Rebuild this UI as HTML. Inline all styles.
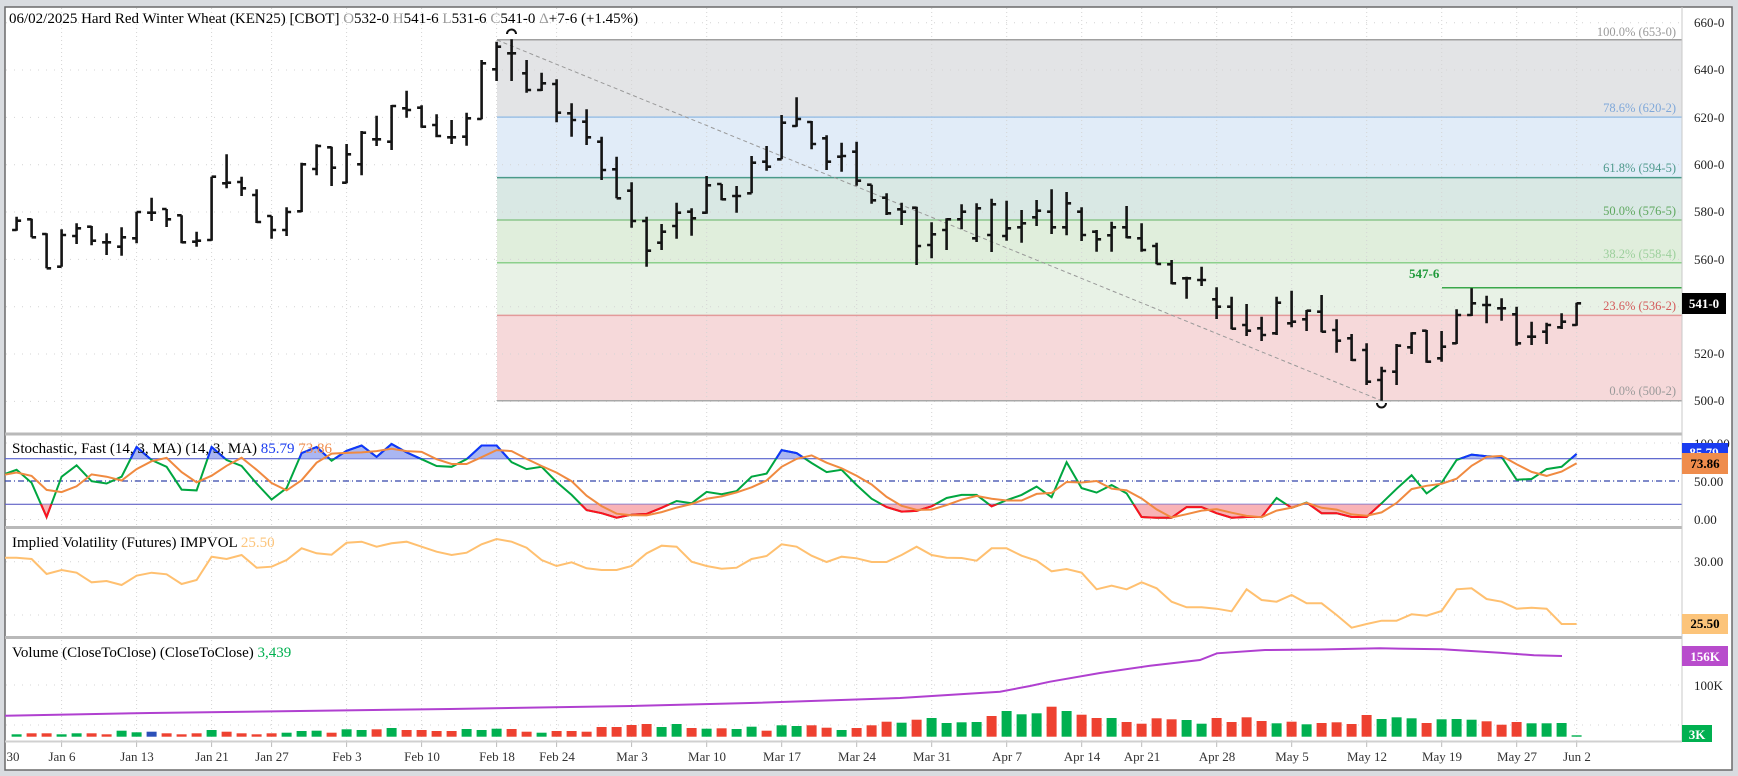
<!DOCTYPE html>
<html><head><meta charset="utf-8">
<style>
html,body{margin:0;padding:0;background:#d9dce0;}
body{width:1738px;height:776px;overflow:hidden;position:relative;font-family:"Liberation Serif",serif;}
svg{position:absolute;left:0;top:0;}
text{font-family:"Liberation Serif",serif;}
</style></head>
<body>
<svg id="s" width="1738" height="776" viewBox="0 0 1738 776" xmlns="http://www.w3.org/2000/svg">
<rect x="0" y="0" width="1738" height="776" fill="#d9dce0"/>
<rect x="5" y="7" width="1727" height="763" fill="#ffffff" stroke="#6a6a6a" stroke-width="1.5"/>
<g id="bg"></g>
<g id="main"></g>
<rect x="5" y="432.5" width="1677" height="3" fill="#b9b9b9"/>
<rect x="5" y="526" width="1677" height="3" fill="#b9b9b9"/>
<rect x="5" y="636" width="1677" height="3" fill="#b9b9b9"/>
<line x1="5" y1="741.5" x2="1682" y2="741.5" stroke="#d0d0d0" stroke-width="2"/>
<line x1="1682" y1="7" x2="1682" y2="741" stroke="#c8c8c8" stroke-width="1"/>
<g font-size="15" fill="#000">
<text x="9" y="23">06/02/2025 Hard Red Winter Wheat (KEN25) [CBOT] <tspan fill="#999">O</tspan>532-0 <tspan fill="#999">H</tspan>541-6 <tspan fill="#999">L</tspan>531-6 <tspan fill="#999">C</tspan>541-0 <tspan fill="#999">Δ</tspan>+7-6 (+1.45%)</text>
<text x="12" y="453">Stochastic, Fast (14, 3, MA)  (14, 3, MA) <tspan fill="#1a3cf0">85.79</tspan> <tspan fill="#ef8c4c">73.86</tspan></text>
<text x="12" y="547">Implied Volatility (Futures)  IMPVOL <tspan fill="#fcc47a">25.50</tspan></text>
<text x="12" y="657">Volume (CloseToClose)  (CloseToClose) <tspan fill="#00b050">3,439</tspan></text>
</g>
<g font-size="12.5" text-anchor="end">
<text x="1676" y="36" fill="#9a9a9a">100.0% (653-0)</text>
<text x="1676" y="112" fill="#7fa8da">78.6% (620-2)</text>
<text x="1676" y="172" fill="#4f9a8e">61.8% (594-5)</text>
<text x="1676" y="215" fill="#5fa85f">50.0% (576-5)</text>
<text x="1676" y="258" fill="#9ccf9c">38.2% (558-4)</text>
<text x="1676" y="310" fill="#d45a5a">23.6% (536-2)</text>
<text x="1676" y="395" fill="#9a9a9a">0.0% (500-2)</text>
</g>
<text x="1409" y="278" font-size="13" font-weight="bold" fill="#1f9a3a">547-6</text>
<g font-size="13" fill="#222">
<text x="1694" y="27">660-0</text>
<text x="1694" y="74">640-0</text>
<text x="1694" y="122">620-0</text>
<text x="1694" y="169">600-0</text>
<text x="1694" y="216">580-0</text>
<text x="1694" y="264">560-0</text>
<text x="1694" y="358">520-0</text>
<text x="1694" y="405">500-0</text>
<text x="1694" y="448">100.00</text>
<text x="1694" y="486">50.00</text>
<text x="1694" y="524">0.00</text>
<text x="1694" y="566">30.00</text>
<text x="1694" y="690">100K</text>
</g>
<rect x="1682" y="293" width="44" height="21" fill="#000"/>
<text x="1704" y="308" font-size="13" font-weight="bold" fill="#fff" text-anchor="middle">541-0</text>
<rect x="1682" y="443" width="46" height="12" fill="#1a3cf0"/>
<text x="1704" y="457" font-size="13" font-weight="bold" fill="#fff" text-anchor="middle">85.79</text>
<rect x="1682" y="453" width="46" height="21" fill="#ef8c4c"/>
<text x="1705" y="468" font-size="13" font-weight="bold" fill="#000" text-anchor="middle">73.86</text>
<rect x="1682" y="614" width="46" height="20" fill="#fcc47a"/>
<text x="1705" y="628" font-size="13" font-weight="bold" fill="#000" text-anchor="middle">25.50</text>
<rect x="1682" y="646" width="46" height="20" fill="#b84ccc"/>
<text x="1705" y="661" font-size="13" font-weight="bold" fill="#fff" text-anchor="middle">156K</text>
<rect x="1682" y="725" width="30" height="17" fill="#00b050"/>
<text x="1697" y="739" font-size="13" font-weight="bold" fill="#fff" text-anchor="middle">3K</text>
<g font-size="13" fill="#333" text-anchor="middle">
<text x="13" y="761">30</text>
<text x="62" y="761">Jan 6</text>
<text x="137" y="761">Jan 13</text>
<text x="212" y="761">Jan 21</text>
<text x="272" y="761">Jan 27</text>
<text x="347" y="761">Feb 3</text>
<text x="422" y="761">Feb 10</text>
<text x="497" y="761">Feb 18</text>
<text x="557" y="761">Feb 24</text>
<text x="632" y="761">Mar 3</text>
<text x="707" y="761">Mar 10</text>
<text x="782" y="761">Mar 17</text>
<text x="857" y="761">Mar 24</text>
<text x="932" y="761">Mar 31</text>
<text x="1007" y="761">Apr 7</text>
<text x="1082" y="761">Apr 14</text>
<text x="1142" y="761">Apr 21</text>
<text x="1217" y="761">Apr 28</text>
<text x="1292" y="761">May 5</text>
<text x="1367" y="761">May 12</text>
<text x="1442" y="761">May 19</text>
<text x="1517" y="761">May 27</text>
<text x="1577" y="761">Jun 2</text>
</g>
</svg>
<script>
(function(){
var bg=document.getElementById('bg'), mn=document.getElementById('main');
var h1='', h2='';
function X(i){return 1.6+15*i;}
var dates=[61.6,136.6,211.6,271.6,346.6,421.6,496.6,556.6,631.6,706.7,781.7,856.7,931.7,1006.7,1081.7,1141.7,1216.7,1291.7,1366.7,1441.7,1516.7,1576.7];
var fz=[[39.8,117.1,'#e3e4e6'],[117.1,177.6,'#e1ecf8'],[177.6,220,'#d9e8e4'],[220,262.8,'#e0eedc'],[262.8,315.4,'#e8f2e6'],[315.4,400.8,'#f6d9da']];
fz.forEach(function(z){h1+='<rect x="497" y="'+z[0]+'" width="1185" height="'+(z[1]-z[0])+'" fill="'+z[2]+'"/>';});
var gy=[22.7,70,117.4,164.7,212,259.4,306.7,354,401.4,443,481,519.5,561.7,615,685,725];
gy.forEach(function(y){h1+='<line x1="6" y1="'+y+'" x2="1682" y2="'+y+'" stroke="#d4d4d4" stroke-width="1" stroke-dasharray="1,7"/>';});
dates.forEach(function(x){h1+='<line x1="'+x+'" y1="8" x2="'+x+'" y2="741" stroke="#d4d4d4" stroke-width="1" stroke-dasharray="1,3"/>';
 h1+='<line x1="'+x+'" y1="741" x2="'+x+'" y2="747" stroke="#bbb" stroke-width="1"/>';});
var fl=[[39.8,'#a0a0a0'],[117.1,'#9cc0e6'],[177.6,'#4a9a8a'],[220,'#8cc68c'],[262.8,'#8cd08c'],[315.4,'#e39a9a'],[400.8,'#a8a8a8']];
fl.forEach(function(l){h1+='<line x1="497" y1="'+l[0]+'" x2="1682" y2="'+l[0]+'" stroke="'+l[1]+'" stroke-width="1.5"/>';});
h1+='<line x1="1442" y1="287.7" x2="1682" y2="287.7" stroke="#3aa84a" stroke-width="1.5"/>';
h1+='<line x1="497" y1="40" x2="1381.7" y2="400.8" stroke="#999" stroke-width="1" stroke-dasharray="4,3"/>';
h1+='<line x1="5" y1="458.7" x2="1682" y2="458.7" stroke="#4a55c8" stroke-width="1.2"/>';
h1+='<line x1="5" y1="504.3" x2="1682" y2="504.3" stroke="#4a55c8" stroke-width="1.2"/>';
h1+='<line x1="5" y1="481" x2="1682" y2="481" stroke="#3344aa" stroke-width="1.2" stroke-dasharray="6,3,1,3"/>';
bg.innerHTML=h1;
var z6=[[590,632,630,602],[596,652,598,652],[640,745,642,745],[628,740,740,645],[610,672,648,625],[618,676,620,662],[640,705,667,667],[622,707,680,652],[575,670,655,576],[533,603,578,578],[567,621,567,598],[586,670,586,667],[635,680,665,662],[470,662,660,470],[403,505,490,488],[470,528,486,505],[508,609,525,606],[588,656,588,630],[562,648,630,576],[428,576,574,433],[373,466,447,378],[380,498,382,443],[372,490,488,403],[333,466,433,338],[287,378,358,358],[255,390,365,258],[212,293,265,270],[256,323,263,320],[283,352,315,348],[300,372,352,352],[278,377,350,295],[120,298,297,130]];
var z7=[[65,183,148,80],[58,183,100,100],[120,218,160,210],[158,213,210,190],[178,307,192,278],[250,350,280,300],[268,375,305,352],[350,480,365,450],[410,535,448,535],[487,623,512,603],[590,740,603,692],[612,690,668,635],[548,656,618,578],[565,647,575,595],[468,581,578,496],[492,541,492,538],[498,578,528,528],[408,520,520,428],[378,452,425,440],[285,418,418,308],[232,320,318,297],[303,388,306,372],[346,450,355,425],[368,455,410,408],[365,497,395,482],[494,551,494,541],[520,585,533,580],[548,615,568,575],[560,735,563,678],[607,715,675,643]];
var z8=[[145,240,180,148],[103,178,148,125],[100,216,205,115],[86,246,195,103],[92,212,198,175],[120,218,172,160],[90,168,142,122],[58,192,125,172],[66,196,172,100],[112,213,125,195],[180,245,185,208],[155,245,196,172],[108,205,172,202],[160,245,205,240],[218,283,228,282],[270,343,283,340],[320,386,325,325],[290,348,330,330],[352,447,388,410],[380,478,410,476],[402,498,465,482],[440,513,475,495],[380,495,490,398],[362,472,460,455],[420,483,448,422],[375,487,425,485],[448,548,480,512],[492,573,505,570],[520,645,540,635],[590,692,630,603],[522,645,605,527],[487,552,532,490],[480,578,482,575]];
var z2=[[993,1085,1075,1040],[928,1032,1030,945],[865,948,945,910],[887,970,915,915],[895,962,925,925],[920,1037,943,1030],[965,1035,1010,1010],[968,1032,995,975],[940,987,982,965],[908,977,975,910]];
var bars=[];
z6.forEach(function(b){bars.push(b.map(function(v){return 20+v/3;}));});
z7.forEach(function(b){bars.push(b.map(function(v){return 20+v/3;}));});
z8.forEach(function(b){bars.push(b.map(function(v){return 170+v/3;}));});
z2.forEach(function(b){bars.push(b.map(function(v){return v/3;}));});
var p='';
bars.forEach(function(b,k){var x=X(k+1).toFixed(1);
 p+='M'+x+' '+b[0].toFixed(1)+'V'+b[1].toFixed(1)+'M'+(X(k+1)-4.5).toFixed(1)+' '+b[2].toFixed(1)+'H'+x+'M'+x+' '+b[3].toFixed(1)+'H'+(X(k+1)+4.5).toFixed(1);});
h2+='<path d="'+p+'" stroke="#141414" stroke-width="2.6" fill="none"/>';
h2+='<path d="M507 34 A4.5 4.5 0 0 1 516 34" stroke="#111" stroke-width="2" fill="none"/>';
h2+='<path d="M1377 403 A4.5 4.5 0 0 0 1386 403" stroke="#111" stroke-width="2" fill="none"/>';
var K=[59,66,49,4,57,72,51,48,57,96,79,70,40,39,96,79,71,48,27,42,88,96,78,91,98,83,100,89,80,71,70,80,98,98,76,67,70,50,33,13,9,3,7,8,16,25,22,
37,34,38,57,61,92,88,75,63,66,46,28,17,11,12,18,29,33,33,18,26,33,44,30,76,42,36,46,35,4,3,3,17,17,9,3,
4,4,29,16,23,9,9,4,4,22,41,59,35,49,79,86,84,83,53,54,67,70,87];
function SY(v){return 520-v*0.76;}
var D=K.map(function(v,i){var a=K.slice(Math.max(0,i-2),i+1);var s=0;a.forEach(function(q){s+=q;});return s/a.length;});
function pts(arr,f){return arr.map(function(v,i){return X(i).toFixed(1)+','+f(v).toFixed(1);}).join(' ');}
var kp=pts(K,SY), dp=pts(D,SY);
var last=X(K.length-1).toFixed(1);
h2+='<defs><clipPath id="cu"><rect x="5" y="436" width="1677" height="22.7"/></clipPath><clipPath id="cd"><rect x="5" y="504.3" width="1677" height="22"/></clipPath><clipPath id="cp"><rect x="5" y="436" width="1677" height="90"/></clipPath><clipPath id="ci"><rect x="5" y="529" width="1677" height="107"/></clipPath></defs>';
h2+='<g clip-path="url(#cp)">';
h2+='<polygon points="'+kp+' '+last+',458.7 1.6,458.7" fill="#aab6f2" clip-path="url(#cu)"/>';
h2+='<polygon points="'+kp+' '+last+',504.3 1.6,504.3" fill="#f9b3b7" clip-path="url(#cd)"/>';
h2+='<polyline points="'+kp+'" fill="none" stroke="#00a640" stroke-width="2"/>';
h2+='<polyline points="'+kp+'" fill="none" stroke="#1133ff" stroke-width="2" clip-path="url(#cu)"/>';
h2+='<polyline points="'+kp+'" fill="none" stroke="#ff1020" stroke-width="2" clip-path="url(#cd)"/>';
h2+='<polyline points="'+dp+'" fill="none" stroke="#f08a40" stroke-width="2"/>';
h2+='</g>';
var IV=[557.7,557.7,559,574,570,572.7,582.3,581,585,575.7,572.7,574.3,584,580,556.7,559,555,567.7,566.7,560,548.3,553.3,554.7,542.7,541.7,546.7,543.3,541.7,546.7,551.7,555,552.7,544.3,539,541.7,547.7,560,566,562.3,568.3,570,570,566,553.3,545.7,546.7,561.7,
566,568.7,567.7,559,556,544.3,546.7,555.7,562,556.7,558.3,562,562,555,546.7,555,557.7,558,560.7,548.3,548.3,555.7,560.7,571.3,569,572.7,589.3,585.7,589.3,582.3,588.3,601.7,607.3,607.3,608.7,611.3,
589.3,600,601.7,595,603.3,603.3,615,627.7,624,620.7,620.7,614.3,615.7,611,589.3,588.3,599,601.7,608.7,607.7,608.7,624,624];
h2+='<polyline clip-path="url(#ci)" points="'+pts(IV,function(v){return v;})+'" fill="none" stroke="#ffc070" stroke-width="2"/>';
var V=['g1063','r1060','r1060','g1063','g1060','r1060','r1063','g1052','g1057','b1055','r1060','r1063','r1060','g1050','r1055','r1060','r1063','r1060','g1058','g1053','g1052','r1058','g1048','g1050','r1048','g1044','r1050','r1050','r1053','r1053','g1047','g1050','g1046','r1047','r1055','g1058','r1053','r1053','r1055','r1041','r1041','r1035','r1032','g1041','g1032','r1044',
'g1046','r1045','g1047','g1040','r1052','g1036','g1038','r1036','r1043','g1050','r1044','r1036','r1025','g1028','r1019','g1014','g1029','g1027','g1026','r1008','g993','g1003','g1000','r980','g993','r1004','r1014','g1014','r1026','r1031','r1015','r1018','g1020','g1031','r1014','r1026',
'r1012','r1023','g1030','r1025','g1033','r1029','r1027','r1032','r1005','g1017','g1012','g1015','r1029','g1018','g1017','g1019','r1024','r1034','r1026','g1030','g1030','g1029','g1066'];
var col={g:'#00b050',r:'#ee4130',b:'#2b50b8'};
V.forEach(function(s,k){var c=col[s[0]];var t=380+parseInt(s.slice(1))/3;var x=X(k+1)-5;
 h2+='<rect x="'+x.toFixed(1)+'" y="'+t.toFixed(1)+'" width="10" height="'+(736.7-t).toFixed(1)+'" fill="'+c+'"/>';});
var OI=[[5,715.7],[150,713],[300,711],[450,709],[632,706],[750,703],[900,698],[1000,691.7],[1030,686],[1050,681.7],[1100,673],[1150,665.7],[1200,660],[1217,653.3],[1265,650],[1320,649.5],[1380,648.3],[1442,649.3],[1500,652.7],[1534,655.3],[1562,656]];
h2+='<polyline points="'+OI.map(function(a){return a[0]+','+a[1];}).join(' ')+'" fill="none" stroke="#b040d0" stroke-width="2"/>';
mn.innerHTML=h2;
})();
</script>
</body></html>
